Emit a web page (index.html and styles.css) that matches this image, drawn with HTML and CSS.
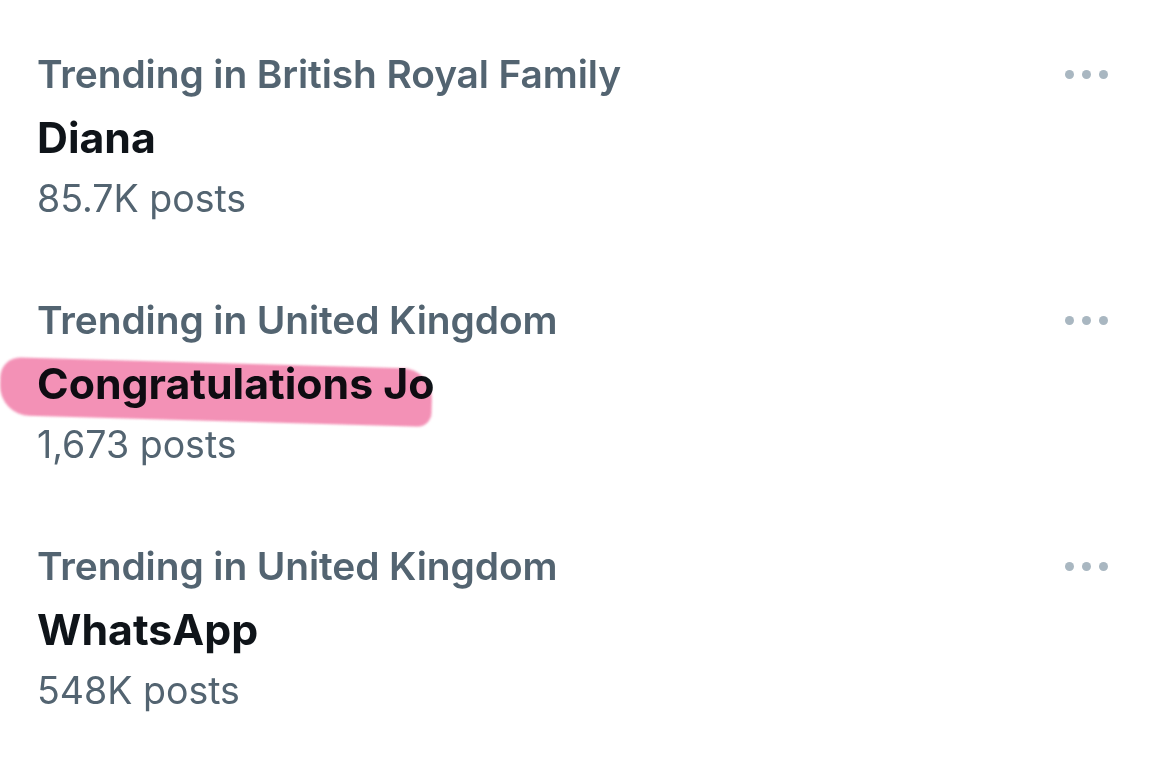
FILE: index.html
```html
<!DOCTYPE html>
<html>
<head>
<meta charset="utf-8">
<link rel="stylesheet" href="styles.css">
</head>
<body>
<div class="list">
  <div class="trend">
    <div class="info">
      <div class="cat">Trending in British Royal Family</div>
      <div class="title">Diana</div>
      <div class="count">85.7K posts</div>
    </div>
    <div class="more"><span></span><span></span><span></span></div>
  </div>
  <div class="trend">
    <div class="info">
      <div class="cat">Trending in United Kingdom</div>
      <div class="title hl-wrap"><span class="hl"></span>Congratulations Jo</div>
      <div class="count">1,673 posts</div>
    </div>
    <div class="more"><span></span><span></span><span></span></div>
  </div>
  <div class="trend">
    <div class="info">
      <div class="cat">Trending in United Kingdom</div>
      <div class="title">WhatsApp</div>
      <div class="count">548K posts</div>
    </div>
    <div class="more"><span></span><span></span><span></span></div>
  </div>
</div>
</body>
</html>
```
FILE: styles.css
```css
html, body {
  margin: 0;
  padding: 0;
  background: #ffffff;
  width: 1170px;
  height: 766px;
  overflow: hidden;
}
.list {
  display: flex;
  flex-direction: column;
  padding: 49px 0 0 37px;
  font-family: Inter, "Liberation Sans", sans-serif;
}
.trend {
  display: flex;
  justify-content: space-between;
  align-items: flex-start;
  height: 246px;
  padding-right: 62px;
}
.info {
  display: flex;
  flex-direction: column;
}
.cat {
  color: #536471;
  font-size: 38.9px;
  font-weight: 600;
  line-height: 50px;
  letter-spacing: -0.1px;
}
.title {
  color: #0f1419;
  font-size: 42.8px;
  font-weight: 700;
  line-height: 50px;
  margin-top: 14px;
}
.count {
  color: #536471;
  font-size: 37.5px;
  font-weight: 400;
  line-height: 50px;
  margin-top: 11px;
}
.hl-wrap {
  position: relative;
}
.hl {
  position: absolute;
  left: -37px;
  top: 4px;
  width: 432px;
  height: 58px;
  background: #f38bb2;
  border-radius: 20px 30px 14px 30px;
  transform: rotate(1.6deg);
  mix-blend-mode: multiply;
  filter: blur(1px);
  opacity: 0.95;
}
.more {
  display: flex;
  gap: 8px;
  margin-top: 21px;
}
.more span {
  width: 9px;
  height: 9px;
  border-radius: 50%;
  background: #a9b7c1;
}
```
